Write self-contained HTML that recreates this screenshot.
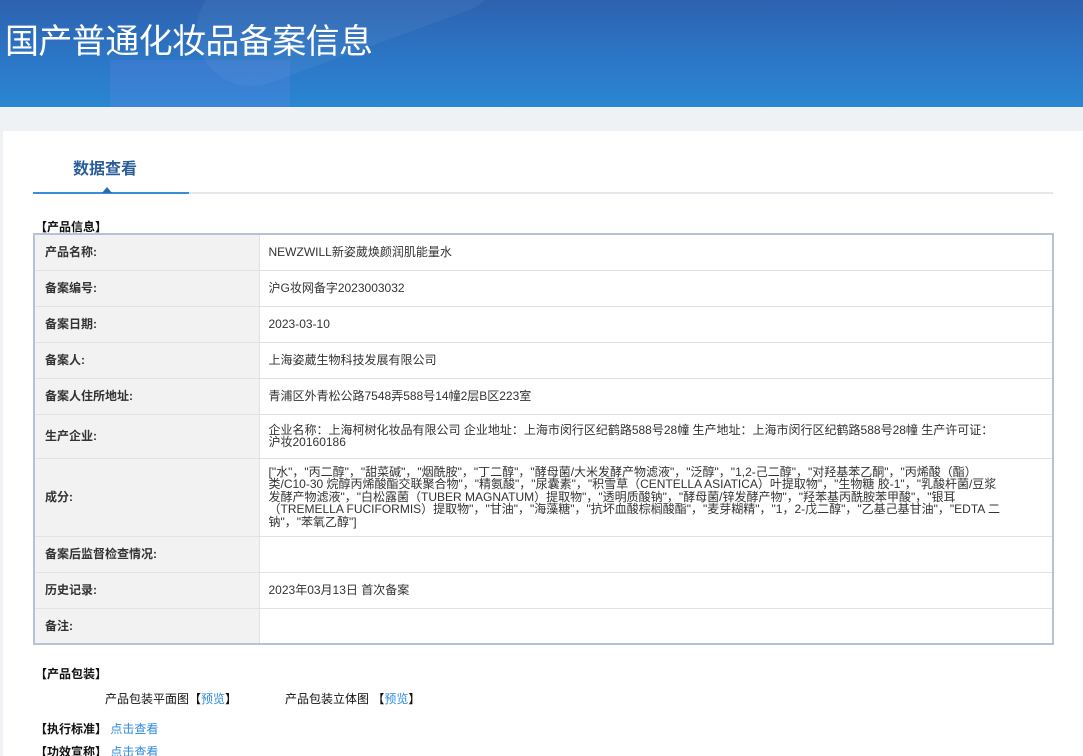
<!DOCTYPE html>
<html><head><meta charset="utf-8"><style>
*{margin:0;padding:0;box-sizing:border-box}
html,body{width:1083px;height:756px;overflow:hidden}
body{background:#eff2f5;font-family:"Liberation Sans","Noto Sans CJK SC",sans-serif;font-size:12px;color:#333;position:relative}
.hd{position:absolute;left:0;top:0;width:1083px;height:107px;background:linear-gradient(180deg,#2d62b0 0%,#2c78c8 60%,#2a86d2 100%);overflow:hidden}
.hd .c1{position:absolute;left:190px;top:-60px;width:320px;height:110px;border-radius:55px;background:rgba(255,255,255,0.05);transform:rotate(-20deg)}
.hd .c2{position:absolute;left:110px;top:60px;width:180px;height:60px;background:rgba(120,140,240,0.18)}
.hd h1{position:absolute;left:5px;top:17px;font-size:34px;font-weight:normal;color:#fff;letter-spacing:-0.6px;font-family:"Noto Sans CJK SC",sans-serif;line-height:44px}
.pn{position:absolute;left:3px;top:131px;width:1080px;height:625px;background:#fff}
.tab{position:absolute;left:73px;top:155px;font-size:16px;font-weight:bold;color:#2a5d9c}
.tl{position:absolute;left:33px;top:192px;width:1020px;height:2px;background:#e3e6ea}
.tb{position:absolute;left:33px;top:192px;width:156px;height:2px;background:#3a8ed8}
.tri{position:absolute;left:102px;top:187px;width:0;height:0;border-left:5px solid transparent;border-right:5px solid transparent;border-bottom:6px solid #2a6bb0}
.sec{position:absolute;left:35px;font-weight:bold;color:#111;font-size:12px}
table{position:absolute;left:33px;top:233px;width:1021px;border-collapse:collapse;border:2px solid #b7c3d5}
td{border:1px solid #e2e2e2;vertical-align:middle;font-size:12px;line-height:12px}
td.l{width:225px;background:#f2f2f2;font-weight:bold;padding-left:10px;color:#333}
td.v{padding:0 52px 0 9px;color:#333}
a{color:#2e8ae0;text-decoration:none}
</style></head><body>
<div class="hd"><div class="c1"></div><div class="c2"></div><h1>国产普通化妆品备案信息</h1></div>
<div class="pn"></div>
<div class="tab">数据查看</div>
<div class="tl"></div><div class="tb"></div><div class="tri"></div>
<div class="sec" style="top:218px">【产品信息】</div>
<table>
<tr style="height:36px"><td class="l">产品名称:</td><td class="v">NEWZWILL新姿葳焕颜润肌能量水</td></tr>
<tr style="height:36px"><td class="l">备案编号:</td><td class="v">沪G妆网备字2023003032</td></tr>
<tr style="height:36px"><td class="l">备案日期:</td><td class="v">2023-03-10</td></tr>
<tr style="height:36px"><td class="l">备案人:</td><td class="v">上海姿葳生物科技发展有限公司</td></tr>
<tr style="height:36px"><td class="l">备案人住所地址:</td><td class="v">青浦区外青松公路7548弄588号14幢2层B区223室</td></tr>
<tr style="height:44px"><td class="l">生产企业:</td><td class="v">企业名称：上海柯树化妆品有限公司 企业地址：上海市闵行区纪鹤路588号28幢 生产地址：上海市闵行区纪鹤路588号28幢 生产许可证：沪妆20160186</td></tr>
<tr style="height:78px"><td class="l">成分:</td><td class="v" style="line-height:12.5px">["水"，"丙二醇"，"甜菜碱"，"烟酰胺"，"丁二醇"，"酵母菌/大米发酵产物滤液"，"泛醇"，"1,2-己二醇"，"对羟基苯乙酮"，"丙烯酸（酯）类/C10-30 烷醇丙烯酸酯交联聚合物"，"精氨酸"，"尿囊素"，"积雪草（CENTELLA ASIATICA）叶提取物"，"生物糖 胶-1"，"乳酸杆菌/豆浆发酵产物滤液"，"白松露菌（TUBER MAGNATUM）提取物"，"透明质酸钠"，"酵母菌/锌发酵产物"，"羟苯基丙酰胺苯甲酸"，"银耳（TREMELLA FUCIFORMIS）提取物"，"甘油"，"海藻糖"，"抗坏血酸棕榈酸酯"，"麦芽糊精"，"1，2-戊二醇"，"乙基己基甘油"，"EDTA 二钠"，"苯氧乙醇"]</td></tr>
<tr style="height:36px"><td class="l">备案后监督检查情况:</td><td class="v"></td></tr>
<tr style="height:36px"><td class="l">历史记录:</td><td class="v">2023年03月13日 首次备案</td></tr>
<tr style="height:36px"><td class="l">备注:</td><td class="v"></td></tr>
</table>
<div class="sec" style="top:665px">【产品包装】</div>
<div style="position:absolute;left:105px;top:690px;color:#111">产品包装平面图【<a>预览</a>】</div>
<div style="position:absolute;left:285px;top:690px;color:#111">产品包装立体图 【<a>预览</a>】</div>
<div class="sec" style="top:720px">【执行标准】 <a style="font-weight:normal">点击查看</a></div>
<div class="sec" style="top:743px">【功效宣称】 <a style="font-weight:normal">点击查看</a></div>
</body></html>
